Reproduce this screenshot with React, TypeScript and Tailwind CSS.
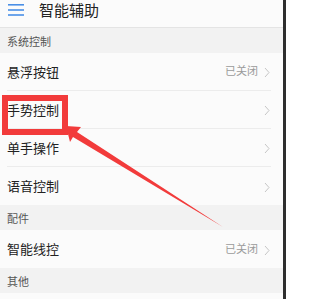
const font = "font-['Roboto','Noto_Sans_CJK_SC',sans-serif]";

type RowProps = { label: string; status?: string; last?: boolean };

function Row({ label, status, last }: RowProps) {
  return (
    <div className="bg-[#fbfbfb] pl-[7px] pr-[12px]">
      <div
        className={`flex h-[38px] items-center justify-between pt-[2px] ${
          last ? "" : "border-b border-[#ececec]"
        }`}
      >
        <span className="text-[13px] text-[#222]">{label}</span>
        <div className="flex items-center gap-[6px]">
          {status && <span className="text-[11px] text-[#9a9a9a]">{status}</span>}
          <svg width="6" height="11" viewBox="0 0 6 11" className="mr-[1px]">
            <path d="M1 1 L5 5.5 L1 10" fill="none" stroke="#c6c6c6" strokeWidth="1" />
          </svg>
        </div>
      </div>
    </div>
  );
}

function Section({ title }: { title: string }) {
  return (
    <div className="flex h-[25px] items-center bg-[#f2f2f2] pl-[7px] pt-[5px] text-[11px] text-[#555]">
      {title}
    </div>
  );
}

export default function App() {
  return (
    <div className={`relative h-[299px] w-[286px] overflow-hidden bg-[#fbfbfb] ${font}`}>
      <div className="flex h-full">
        <div className="flex-1">
          <div className="flex h-[28px] items-start gap-[15px] border-b border-[#e4e4e4] bg-[#fbfbfb] pl-[8px] pt-[1px]">
            <svg width="16" height="14" viewBox="0 0 16 14" className="mt-[2px]">
              <rect x="0" y="1" width="16" height="1.6" fill="#4a8fe6" />
              <rect x="0" y="6.2" width="16" height="1.6" fill="#4a8fe6" />
              <rect x="0" y="11.2" width="16" height="1.6" fill="#4a8fe6" />
            </svg>
            <span className="text-[15px] leading-[20px] text-[#222]">智能辅助</span>
          </div>
          <Section title="系统控制" />
          <Row label="悬浮按钮" status="已关闭" />
          <Row label="手势控制" />
          <Row label="单手操作" />
          <Row label="语音控制" last />
          <Section title="配件" />
          <Row label="智能线控" status="已关闭" last />
          <Section title="其他" />
        </div>
        <div className="w-[3px] bg-[#2e2e2e]" />
      </div>

      <svg
        className="pointer-events-none absolute left-0 top-0"
        width="286"
        height="299"
        viewBox="0 0 286 299"
      >
        <rect x="5" y="98" width="60" height="34" fill="none" stroke="#f23b3b" strokeWidth="6" />
        <polygon
          points="66,126 81,127 77,132 223,227 73,137 70,142"
          fill="#f23b3b"
        />
      </svg>
    </div>
  );
}
